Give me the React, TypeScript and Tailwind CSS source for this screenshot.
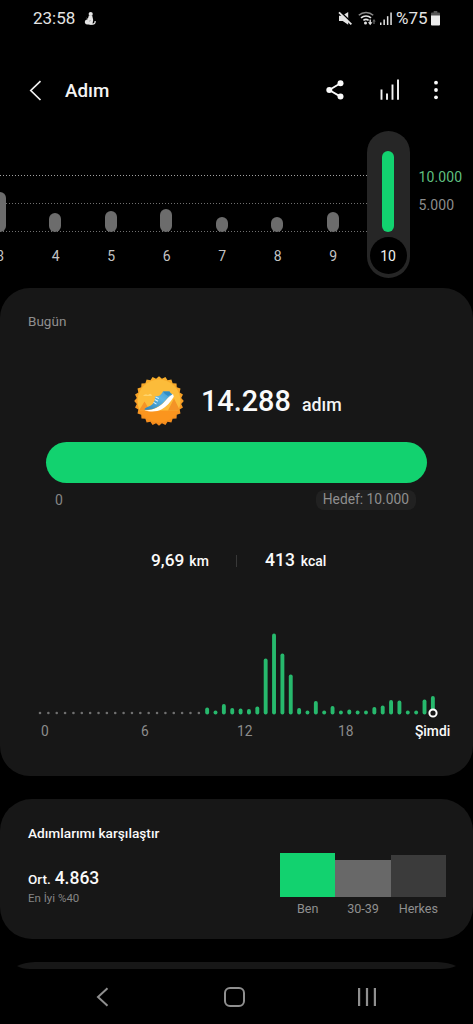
import { clsx } from 'clsx'

type Day = { label: string; height: number }

const days: Day[] = [
  { label: '3', height: 40 },
  { label: '4', height: 19 },
  { label: '5', height: 21 },
  { label: '6', height: 23 },
  { label: '7', height: 15 },
  { label: '8', height: 15 },
  { label: '9', height: 20 },
]

// one entry per half hour, 0 means no steps
const halfHours = [
  0, 0, 0, 0, 0, 0, 0, 0, 0, 0, 0, 0, 0, 0, 0, 0, 0, 0, 0, 0,
  7, 4, 10.5, 6.5, 6, 5.5, 8, 56, 81, 61, 40, 6.5, 4, 13.5, 4, 8.5,
  4, 5, 4, 4, 7.5, 9, 14.5, 14, 4, 4, 15, 18.5,
]

const compareBars = [
  { label: 'Ben', bar: 'h-[44px] bg-[#12d26f]' },
  { label: '30-39', bar: 'h-[37px] bg-[#686868]' },
  { label: 'Herkes', bar: 'h-[42px] bg-[#3b3b3b]' },
]

function StatusBar() {
  return (
    <div className="flex h-9 items-center pl-[33px] pr-[33px] text-[17px] leading-none text-[#e4e4e4]">
      <span className="w-[51px] whitespace-nowrap">23:58</span>
      <svg className="h-[15px] w-[12px]" viewBox="0 0 12 15" fill="#e4e4e4">
        <circle cx="6.7" cy="3" r="2.1" />
        <path d="M4.8 4.6h3.4l1 4.4-.8 4.5H3.6C1 13.4.4 11.6 1 10c.5-1.1 1.8-1.3 2.8-2z" />
        <path d="M5.5 13.2h3.2c1.8 0 2.500-1.8 2.500-3.2" fill="none" stroke="#e4e4e4" strokeWidth="1.2" />
        <path d="M2.500 7l1.500.8M5 10.300l1.700-.8" stroke="#999" strokeWidth=".8" />
      </svg>
      <div className="flex-1" />
      <svg className="h-[15px] w-[15px]" viewBox="0 0 15 15">
        <path d="M1 4.800h3.200L10.200 1v12.800L4.700 10H1z" fill="#e4e4e4" />
        <path d="M1.600 0l13 12.600" stroke="#000" strokeWidth="1.600" />
        <path d="M1 1.400l12.400 12" stroke="#e4e4e4" strokeWidth="1.800" />
      </svg>
      <svg className="ml-[5px] h-[15px] w-[18px]" viewBox="0 0 18 15" fill="none">
        <path d="M.8 4.200c4-3.700 10.400-3.700 14.400 0" stroke="#8a8a8a" strokeWidth="1.500" />
        <path d="M3 6.900c2.900-2.600 7.100-2.600 10 0M5.400 9.400c1.600-1.300 3.600-1.300 5.200 0" stroke="#e4e4e4" strokeWidth="1.600" />
        <circle cx="7.500" cy="12" r="1.500" fill="#e4e4e4" />
        <path d="M12.200 8.500v3.500" stroke="#e4e4e4" strokeWidth="1.400" />
        <path d="M9.900 11.300h4.600l-2.300 2.900z" fill="#e4e4e4" />
        <path d="M16 13V10" stroke="#666" strokeWidth="1.200" />
        <path d="M14.300 10.400h3.400L16 8.100z" fill="#666" />
      </svg>
      <svg className="ml-[3px] h-[15px] w-[14px]" viewBox="0 0 14 15" fill="#e4e4e4">
        <rect x="1" y="11.500" width="1.500" height="2.500" />
        <rect x="4.400" y="8.500" width="1.500" height="5.500" />
        <rect x="7.900" y="5.200" width="1.500" height="8.800" />
        <rect x="11.300" y="1.500" width="1.500" height="12.500" />
      </svg>
      <span className="ml-[3px] w-[35px] whitespace-nowrap">%75</span>
      <svg className="h-[15px] w-[9px]" viewBox="0 0 10 15" preserveAspectRatio="none">
        <path d="M3 0h4v1.600h2q1 0 1 1V5H0V2.600q0-1 1-1h2z" fill="#555" />
        <path d="M0 4.500h10v9.300q0 .8-1 .8H1q-1 0-1-.8z" fill="#ececec" />
      </svg>
    </div>
  )
}

function Header() {
  return (
    <div className="mt-[30px] flex h-[50px] items-center pl-[29px] pr-[34px]">
      <svg className="h-[22px] w-[14px]" viewBox="0 0 14 22" fill="none" stroke="#f0f0f0" strokeWidth="1.700">
        <path d="M11.500 1.200L1.800 10.500l9.700 9.500" />
      </svg>
      <h1 className="ml-[22px] flex-1 text-[18.800px] font-medium leading-none text-[#f4f4f4]">Adım</h1>
      <svg className="-mt-[2px] h-[20px] w-[18px]" viewBox="0 0 18 20" fill="#fafafa">
        <path d="M14.500 3.200L3.200 10l11.300 6.600" fill="none" stroke="#fafafa" strokeWidth="1.800" />
        <circle cx="14.500" cy="3.300" r="3" />
        <circle cx="3.300" cy="10" r="3" />
        <circle cx="14.500" cy="16.600" r="3" />
      </svg>
      <svg className="ml-[36px] -mt-[2px] h-[22px] w-[20px]" viewBox="0 0 20 22" stroke="#f4f4f4" strokeWidth="1.900">
        <path d="M1.500 10.500v10.300M7 14.500v6.300M12.500 5.500v15.300M18 .5v20.300" />
      </svg>
      <svg className="ml-[33px] -mt-[2px] h-[20px] w-[6px]" viewBox="0 0 6 20" fill="#fafafa">
        <circle cx="3" cy="2.700" r="1.900" />
        <circle cx="3" cy="10" r="1.900" />
        <circle cx="3" cy="17.300" r="1.900" />
      </svg>
    </div>
  )
}

function DayChart() {
  return (
    <div className="relative mt-[15px] flex h-[147px] overflow-hidden">
      <svg className="absolute left-0 top-0 h-[147px] w-[368px]" strokeDasharray="1 2">
        <path d="M0 44.500h368" stroke="#a0a0a0" />
        <path d="M0 72.500h368M0 100.500h368" stroke="#707070" />
      </svg>
      <div className="relative -ml-[28px] flex shrink-0">
        {days.map((day) => (
          <div key={day.label} className="flex w-[55.500px] flex-col items-center">
            <div className="flex h-[101px] items-end">
              <div className="w-3 rounded-full bg-[#6c6c6c]" style={{ height: day.height }} />
            </div>
            <span className="mt-[16px] pl-px text-[14px] leading-4 text-[#c4c4c4]">{day.label}</span>
          </div>
        ))}
      </div>
      <div className="relative ml-[6px] flex w-[43px] shrink-0 flex-col items-center rounded-full bg-[#262626] pt-5">
        <div className="h-[81px] w-3 rounded-full bg-[#12d26f]" />
        <div className="mt-[5px] flex h-[37px] w-[37px] items-center justify-center rounded-full bg-black pt-[2px] text-[14px] text-[#f0f0f0]">
          10
        </div>
      </div>
      <div className="ml-[9px] pt-[38px] text-[14px] leading-4 tracking-[0.1px]">
        <div className="text-[#5fbf7f]">10.000</div>
        <div className="mt-3 text-[#8c8c8c]">5.000</div>
      </div>
    </div>
  )
}

function Badge() {
  const points = Array.from({ length: 48 }, (_, i) => {
    const r = i % 2 ? 22.4 : 24.8
    const a = (i * Math.PI) / 24
    return `${25 + r * Math.cos(a)},${25 + r * Math.sin(a)}`
  }).join(' ')

  return (
    <svg className="h-[50px] w-[50px]" viewBox="0 0 50 50">
      <defs>
        <clipPath id="badge-disc">
          <circle cx="25" cy="25" r="21.500" />
        </clipPath>
        <linearGradient id="badge-rim" x1="0" y1="0" x2="0" y2="1">
          <stop offset="0" stopColor="#f9b02c" />
          <stop offset="1" stopColor="#f48a1c" />
        </linearGradient>
        <linearGradient id="shoe" x1="0" y1="1" x2="1" y2="0">
          <stop offset="0" stopColor="#2a83bb" />
          <stop offset=".6" stopColor="#5bb5e3" />
          <stop offset="1" stopColor="#3c9bd0" />
        </linearGradient>
      </defs>
      <polygon points={points} fill="url(#badge-rim)" />
      <g clipPath="url(#badge-disc)">
        <path d="M0 0h50v35H0z" fill="#fcbc3a" />
        <path d="M0 34.500h50V50H0z" fill="#fb951e" />
        <path d="M5 34.500l5.500-9 5.500 9zM34 34.500l6-12 6 12z" fill="#f49427" />
        <path d="M9 20q2-3 5-1 3-3 4 1z" fill="#fdd36b" />
        <path d="M10.500 34c8 1 14.500-3 19-7.300 3-3.200 5.500-7.200 9.500-8.700l.8 2.800c-3.500 5.500-7.500 10-12 12.500-4.800 2.600-12 3-17.300.7z" fill="#fff" />
        <path d="M10.500 33.500c.5-2 4-2.700 7-4.500 2-1.300 3.500-4.300 4-9 2.500.8 5 0 7.500-4.500h6.500c.5 1.300 1.700 2.300 3 3-3.800 1.500-6 5-9 8-4.700 4.600-11.500 8.200-19 7z" fill="url(#shoe)" />
        <path d="M29 15.500h6.500q.8 1.600 2.300 2.500L34 20q-3.500-1.500-5-4.500z" fill="#2f8cc4" />
        <path d="M21.500 21l3.400 1.600M20.800 23.600l3.200 1.700M19.500 26.300l3 1.800" stroke="#d5eefb" strokeWidth="1.100" />
      </g>
    </svg>
  )
}

function HourChart() {
  return (
    <svg className="mt-[59px] block h-[90px] w-full" viewBox="0 630 473 90">
      {halfHours.map((h, i) => {
        const x = 40 + i * 8.36
        return h === 0 ? (
          <circle key={i} cx={x} cy="713" r="1.300" fill="#707070" />
        ) : (
          <rect key={i} x={x - 2} y={714.5 - h} width="3.900" height={h} rx="1.900" fill="#27b96d" />
        )
      })}
      <circle cx="433" cy="713" r="3.600" fill="#171717" stroke="#fff" strokeWidth="2" />
    </svg>
  )
}

function TodayCard() {
  return (
    <section className="mt-[10px] h-[488px] rounded-[30px] bg-[#171717]">
      <div className="pl-[28px] pt-[25px] text-[13.500px] leading-4 text-[#8f8f8f]">Bugün</div>
      <div className="mt-[47px] flex h-[50px] items-center pl-[134px]">
        <Badge />
        <span className="ml-[17px] w-[101px] whitespace-nowrap text-[28.800px] font-medium leading-none text-[#fafafa]">14.288</span>
        <span className="pt-[7px] text-[17.800px] font-medium leading-none text-[#f4f4f4]">adım</span>
      </div>
      <div className="mx-[46px] mt-4 h-[41px] rounded-full bg-[#12d26f]" />
      <div className="mt-[7px] flex h-5 items-center justify-between pl-[55px] pr-[57px] text-[14px] leading-none text-[#858585]">
        <span>0</span>
        <span className="flex h-5 items-center rounded-lg bg-[#212121] px-[7px] text-[13.800px] text-[#8f8f8f]">Hedef: 10.000</span>
      </div>
      <div className="mt-[41px] flex h-5 items-center pl-[151px] font-medium leading-none text-[#fafafa]">
        <div className="flex w-[85px] items-baseline gap-[5px]">
          <span className="text-[17.300px]">9,69</span>
          <span className="text-[14px]">km</span>
        </div>
        <div className="h-3 w-px bg-[#383838]" />
        <div className="ml-[28px] flex items-baseline gap-[6px]">
          <span className="text-[17.500px]">413</span>
          <span className="text-[14px]">kcal</span>
        </div>
      </div>
      <HourChart />
      <div className="mt-[3px] grid grid-cols-[100px_100px_101px_74px_48px] pl-[40px] text-[13.800px] leading-4 text-[#8c8c8c]">
        <span className="pl-px">0</span>
        <span className="pl-px">6</span>
        <span className="-ml-[3px]">12</span>
        <span className="-ml-[3px]">18</span>
        <span className="font-medium text-[#fafafa]">Şimdi</span>
      </div>
    </section>
  )
}

function CompareCard() {
  return (
    <section className="mt-[23px] flex h-[140px] justify-between rounded-[32px] bg-[#171717] pl-[28px] pr-[27px]">
      <div className="pt-[26px]">
        <h2 className="text-[13.700px] font-medium leading-4 text-[#fafafa]">Adımlarımı karşılaştır</h2>
        <div className="mt-[27px] flex items-baseline gap-1 font-medium leading-5 text-[#fafafa]">
          <span className="text-[13.500px]">Ort.</span>
          <span className="text-[17.500px]">4.863</span>
        </div>
        <div className="mt-[2px] text-[11.500px] leading-[14px] text-[#858585]">En İyi %40</div>
      </div>
      <div className="flex h-[98px] items-end">
        {compareBars.map((item) => (
          <div key={item.label} className="-mb-[20px] w-[55.300px]">
            <div className={clsx('w-full', item.bar)} />
            <div className="pt-1 text-center text-[12.600px] leading-4 text-[#8f8f8f]">{item.label}</div>
          </div>
        ))}
      </div>
    </section>
  )
}

function NavBar() {
  return (
    <div className="flex h-[55px] items-center pl-[96px] pr-[97px]">
      <svg className="h-[20px] w-[14px]" viewBox="0 0 14 20" fill="none" stroke="#8f8f8f" strokeWidth="2">
        <path d="M11.500 1.200L2 10l9.500 8.800" />
      </svg>
      <div className="ml-[114px] h-5 w-[21px] rounded-[6px] border-2 border-[#8f8f8f]" />
      <svg className="ml-auto h-[18px] w-[18px]" viewBox="0 0 18 18" fill="#8f8f8f">
        <rect x="0" width="2.200" height="18" />
        <rect x="7.900" width="2.200" height="18" />
        <rect x="15.800" width="2.200" height="18" />
      </svg>
    </div>
  )
}

export default function App() {
  return (
    <div className="h-[1024px] w-[473px] overflow-hidden bg-black font-['Roboto',sans-serif]">
      <StatusBar />
      <Header />
      <DayChart />
      <TodayCard />
      <CompareCard />
      <svg className="mt-[23px] block h-[7px] w-full" viewBox="0 0 473 7" fill="#171717">
        <path d="M35 0H437Q449 .5 456 4Q450 7 440 7H30Q22 7 17 4Q24 .5 35 0z" />
      </svg>
      <NavBar />
    </div>
  )
}
